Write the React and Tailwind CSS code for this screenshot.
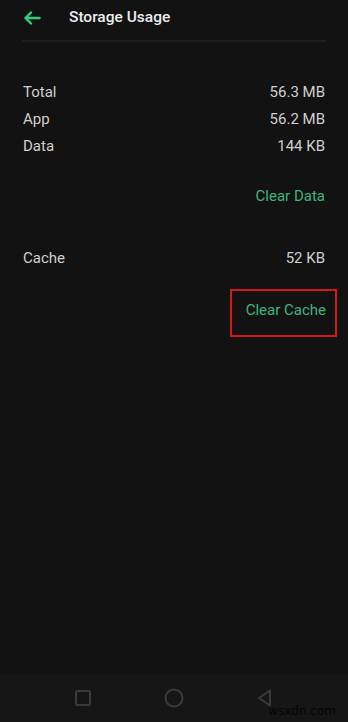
import React from 'react';

const rows = [
  { label: 'Total', value: '56.3 MB' },
  { label: 'App', value: '56.2 MB' },
  { label: 'Data', value: '144 KB' },
];

export default function App() {
  return (
    <div
      className="w-[348px] h-[722px] bg-[#121212] flex flex-col overflow-hidden"
      style={{ fontFamily: 'Roboto, "Noto Sans", sans-serif' }}
    >
      <div className="h-[34px] flex items-center pt-[1px]">
        <svg width="18" height="14" viewBox="0 0 18 14" className="ml-[23px]">
          <path d="M8 1.5 L2.5 7 L8 12.5 M2.5 7 H16.5" fill="none" stroke="#2fcf7f" strokeWidth="2.4" strokeLinecap="round" strokeLinejoin="round" />
        </svg>
        <span className="ml-[28px] text-[15.5px] font-medium text-[#ececec]">Storage Usage</span>
      </div>
      <div className="mt-[6px] mx-[22px] h-[2px] bg-[#1e1e1e]" />

      <div className="flex-1 px-[23px] pt-[37px] text-[15px] text-[#cfcfcf]">
        {rows.map((r) => (
          <div key={r.label} className="h-[27px] flex items-center justify-between">
            <span>{r.label}</span>
            <span>{r.value}</span>
          </div>
        ))}
        <div className="h-[28px] mt-[22px] flex items-center justify-end text-[#3fb47a]">
          Clear Data
        </div>
        <div className="h-[27px] mt-[35px] flex items-center justify-between">
          <span>Cache</span>
          <span>52 KB</span>
        </div>
        <div className="flex justify-end mt-[17px] -mr-[12px]">
          <div className="w-[107px] h-[48px] border-[2.5px] border-[#d5181d] flex items-center justify-end pr-[9px] pb-[6px] text-[#3fb47a]">
            Clear Cache
          </div>
        </div>
      </div>

      <div className="relative h-[48px] bg-[#161616] flex items-center">
        <div className="w-full flex items-center justify-around px-[38px] -mt-[1px]">
          <svg width="20" height="20" viewBox="0 0 20 20">
            <rect x="3" y="3" width="14" height="14" rx="1.5" fill="none" stroke="#3a3a3a" strokeWidth="2" />
          </svg>
          <svg width="22" height="22" viewBox="0 0 22 22">
            <circle cx="11" cy="11" r="8.5" fill="none" stroke="#3a3a3a" strokeWidth="2" />
          </svg>
          <svg width="20" height="20" viewBox="0 0 20 20">
            <path d="M15 2.5 L4 10 L15 17.5 Z" fill="none" stroke="#3a3a3a" strokeWidth="2" strokeLinejoin="round" />
          </svg>
        </div>
        <span
          className="absolute right-[12px] bottom-[2px] text-[12px] text-[#050505]"
          style={{ fontFamily: '"DejaVu Sans", sans-serif' }}
        >
          wsxdn.com
        </span>
      </div>
    </div>
  );
}
